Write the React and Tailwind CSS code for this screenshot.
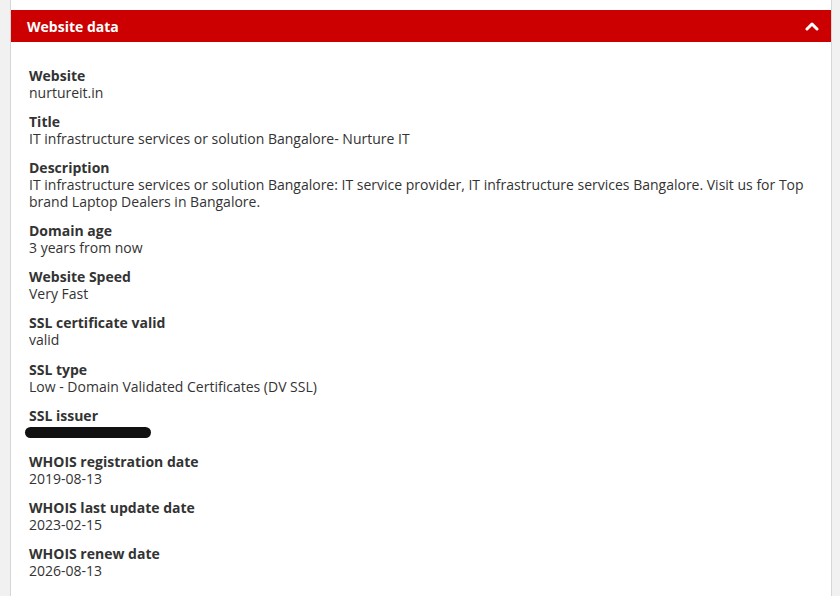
export default function App() {
  const items = [
    ["Website", "nurtureit.in"],
    ["Title", "IT infrastructure services or solution Bangalore- Nurture IT"],
    [
      "Description",
      "IT infrastructure services or solution Bangalore: IT service provider, IT infrastructure services Bangalore. Visit us for Top brand Laptop Dealers in Bangalore.",
    ],
    ["Domain age", "3 years from now"],
    ["Website Speed", "Very Fast"],
    ["SSL certificate valid", "valid"],
    ["SSL type", "Low - Domain Validated Certificates (DV SSL)"],
    ["SSL issuer", null],
    ["WHOIS registration date", "2019-08-13"],
    ["WHOIS last update date", "2023-02-15"],
    ["WHOIS renew date", "2026-08-13"],
  ];
  return (
    <div
      className="flex h-[596px] w-[840px] overflow-hidden bg-white text-[14px] text-[#333]"
      style={{ fontFamily: '"Open Sans", sans-serif' }}
    >
      <div className="w-[11px] shrink-0 border-r border-[#d6d6d6] bg-[#f1f1f1]" />
      <div className="flex w-[820px] shrink-0 flex-col pt-[10px]">
        <div className="flex h-[32px] items-center justify-between bg-[#cc0000] pl-[16px] pr-[12px] text-white">
          <span className="font-bold">Website data</span>
          <svg width="14" height="10" viewBox="0 0 14 10">
            <path d="M2 8 L7 3 L12 8" fill="none" stroke="white" strokeWidth="3" strokeLinecap="round" strokeLinejoin="round" />
          </svg>
        </div>
        <div className="flex flex-col gap-[12.1px] pl-[18px] pr-[16px] pt-[25px] leading-[17px]">
          {items.map(([label, value]) => (
            <div key={label} className="flex flex-col">
              <span className="font-bold">{label}</span>
              {value === null ? (
                <span className="relative h-[17px]">
                  <span className="absolute left-[-4px] top-[3px] h-[11px] w-[126px] rounded-full bg-[#111]" />
                </span>
              ) : (
                <span>{value}</span>
              )}
            </div>
          ))}
        </div>
      </div>
      <div className="flex-1 border-l border-[#d6d6d6] bg-[#f1f1f1]" />
    </div>
  );
}
